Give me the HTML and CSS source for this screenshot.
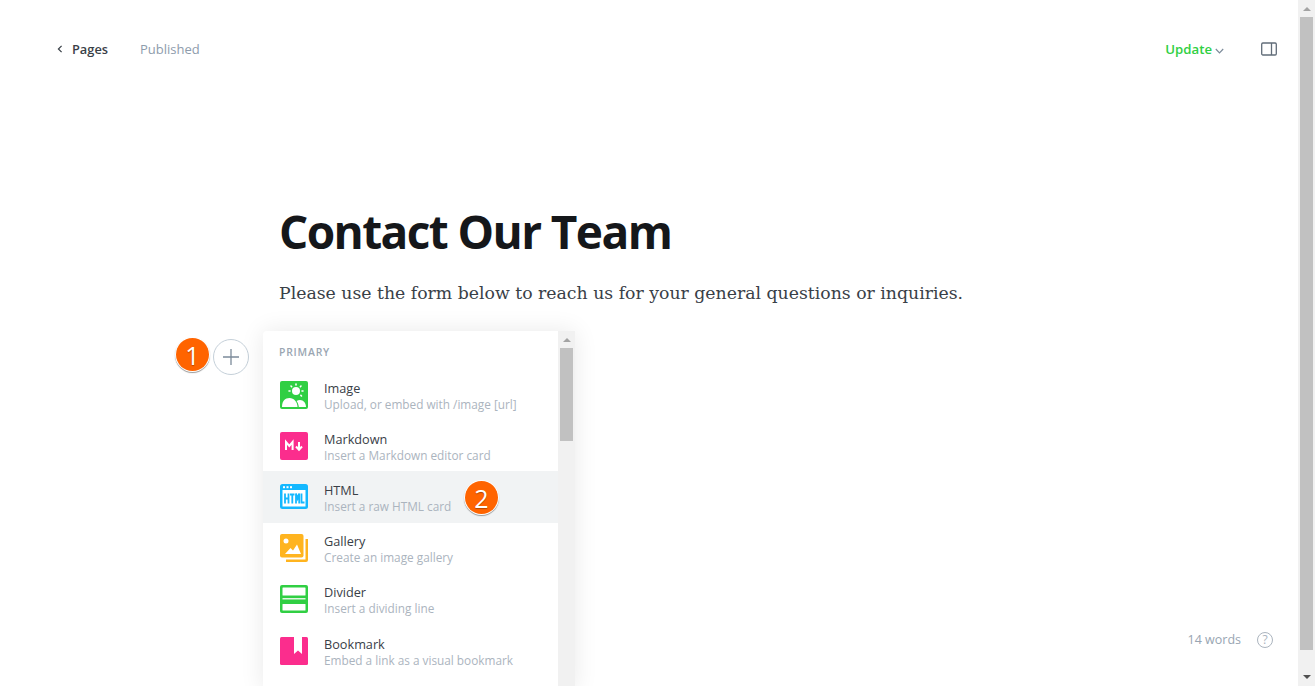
FILE: index.html
```html
<!DOCTYPE html>
<html lang="en">
<head>
<meta charset="utf-8">
<title>Contact Our Team</title>
<link rel="stylesheet" href="styles.css">
</head>
<body>
<div class="app">
  <main class="editor">
    <header class="topbar">
      <div class="crumbs">
        <a class="back">
          <svg class="chev-left" width="6" height="8" viewBox="0 0 6 8"><path d="M4.6 .8 1.400 4l3.200 3.200" fill="none" stroke="#394047" stroke-width="1.200"/></svg>
          Pages
        </a>
        <span class="status">Published</span>
      </div>
      <div class="actions">
        <a class="update">Update
          <svg width="9" height="6" viewBox="0 0 9 6"><path d="M.8 1 4.500 4.800 8.200 1" fill="none" stroke="#7c8b9a" stroke-width="1.200"/></svg>
        </a>
        <svg class="panel-icon" width="16" height="14" viewBox="0 0 16 14"><rect x=".7" y="1" width="14.600" height="12" rx="1.200" fill="none" stroke="#626d79" stroke-width="1.300"/><path d="M10.500 1v12" stroke="#626d79" stroke-width="1.300"/></svg>
      </div>
    </header>

    <section class="content">
      <h1 class="title">Contact Our Team</h1>
      <p class="lead">Please use the form below to reach us for your general questions or inquiries.</p>
    </section>

    <div class="plus">
      <svg width="16" height="16" viewBox="0 0 16 16"><path d="M8 0v16M0 8h16" stroke="#7c8b9a" stroke-width="1.300"/></svg>
    </div>
    <span class="badge badge-one">1</span>

    <div class="menu">
      <div class="menu-list">
        <div class="menu-heading">PRIMARY</div>

        <div class="item">
          <svg class="icon" viewBox="0 0 28 28"><rect width="28" height="28" rx="2" fill="#30cf43"/><circle cx="16" cy="10" r="4" fill="#fff"/><g stroke="#fff" stroke-width="1.600" stroke-linecap="round"><path d="M16 3v1M23 10h-1M10 10H9M21 5l-.6.6M11 5l.6.6M21.500 15l-.6-.6"/></g><path d="M2 26c0-6 3-9 7.500-9s8 4 8 9z" fill="#fff"/><path d="M18.800 26c-.2-2.500-1-4.500-2.200-6 1-.7 2.200-1 3.400-1 3.500 0 6 3 6 7z" fill="#fff"/></svg>
          <div class="item-text"><div class="item-name">Image</div><div class="item-desc">Upload, or embed with /image [url]</div></div>
        </div>

        <div class="item">
          <svg class="icon" viewBox="0 0 28 28"><rect width="28" height="28" rx="2" fill="#fb2d8d"/><path d="M6 18v-8l3.300 4 3.300-4v8" fill="none" stroke="#fff" stroke-width="2"/><path d="M19 10v7.500M16 14.500l3 3.200 3-3.200" fill="none" stroke="#fff" stroke-width="2"/></svg>
          <div class="item-text"><div class="item-name">Markdown</div><div class="item-desc">Insert a Markdown editor card</div></div>
        </div>

        <div class="item is-active">
          <svg class="icon" viewBox="0 0 28 28"><rect y="1" width="28" height="25" rx="2.500" fill="#14b8ff"/><rect x="2.500" y="7" width="23" height="16.500" fill="#fff"/><g fill="#fff"><rect x="3" y="3.200" width="2" height="2"/><rect x="6.500" y="3.200" width="2" height="2"/><rect x="10" y="3.200" width="2" height="2"/></g><path d="M5 10.500v10M8.500 10.500v10M5 15.500h3.500M10 11.500h4.500M12.300 11v9.500M16 20.500v-10l1.600 5 1.600-5v10M21.500 10.500v9h3" fill="none" stroke="#14b8ff" stroke-width="1.800"/></svg>
          <div class="item-text"><div class="item-name">HTML</div><div class="item-desc">Insert a raw HTML card</div></div>
        </div>

        <div class="item">
          <svg class="icon" viewBox="0 0 28 28"><path d="M25.500 5H28v21a2 2 0 0 1-2 2H6v-2.500h19.500z" fill="#ffb41f"/><rect width="23.500" height="23.500" rx="2" fill="#ffb41f"/><circle cx="6" cy="7" r="2.500" fill="#fff"/><path d="M5 20l5.500-6 2.500 2.500 4-6 4 9.500z" fill="#fff"/></svg>
          <div class="item-text"><div class="item-name">Gallery</div><div class="item-desc">Create an image gallery</div></div>
        </div>

        <div class="item">
          <svg class="icon" viewBox="0 0 28 28"><rect width="28" height="28" rx="2" fill="#30cf43"/><rect x="2.500" y="2.500" width="23" height="8" rx=".5" fill="#fff"/><rect x="2.500" y="13" width="23" height="1.500" fill="#dff7e2"/><rect x="2.500" y="19" width="23" height="6.500" rx=".5" fill="#fff"/></svg>
          <div class="item-text"><div class="item-name">Divider</div><div class="item-desc">Insert a dividing line</div></div>
        </div>

        <div class="item">
          <svg class="icon" viewBox="0 0 28 28"><rect width="28" height="28" rx="1.500" fill="#fb2d8d"/><path d="M14 0h8v17l-4-3.500-4 3.500z" fill="#fff"/></svg>
          <div class="item-text"><div class="item-name">Bookmark</div><div class="item-desc">Embed a link as a visual bookmark</div></div>
        </div>
      </div>
      <div class="menu-scroll">
        <span class="arrow-up menu-arrow"></span>
        <div class="menu-thumb"></div>
      </div>
    </div>

    <span class="badge badge-two">2</span>

    <div class="wordcount">
      <span>14 words</span>
      <span class="help">?</span>
    </div>
  </main>

  <aside class="scrollbar">
    <span class="arrow-up"></span>
    <div class="thumb"></div>
    <span class="arrow-down"></span>
  </aside>
</div>
</body>
</html>
```

FILE: styles.css
```css
* { box-sizing: border-box; }

html, body {
  margin: 0;
  height: 100%;
  overflow: hidden;
  background: #fff;
}

body {
  font-family: "Open Sans", "Noto Sans", sans-serif;
  color: #15171a;
}

.app {
  display: flex;
  height: 686px;
}

.editor {
  position: relative;
  flex: 1;
  min-width: 0;
  overflow: hidden;
}

.topbar {
  display: flex;
  justify-content: space-between;
  align-items: center;
  padding: 40px 21px 0 57px;
  height: 58px;
}

.crumbs {
  display: flex;
  align-items: center;
  gap: 32px;
}

.back {
  display: flex;
  align-items: center;
  gap: 9px;
  font-size: 12.800px;
  font-weight: 600;
  color: #394047;
}

.status {
  font-size: 13px;
  color: #8e9cac;
}

.actions {
  display: flex;
  align-items: center;
  gap: 37px;
}

.update {
  display: flex;
  align-items: center;
  gap: 3px;
  font-size: 13.200px;
  font-weight: 600;
  color: #30cf43;
}

.update svg { margin-top: 3px; }

.content {
  padding: 145px 0 0 280px;
}

.title {
  margin: 0 0 0 -1px;
  font-size: 46px;
  line-height: 56px;
  font-weight: 700;
  letter-spacing: -1.600px;
  color: #15171a;
}

.lead {
  margin: 19px 0 0 -1px;
  font-family: "DejaVu Serif", "Liberation Serif", serif;
  font-size: 17.300px;
  line-height: 30px;
  color: #394047;
}

.plus {
  position: absolute;
  left: 213px;
  top: 339px;
  width: 36px;
  height: 36px;
  display: flex;
  align-items: center;
  justify-content: center;
  border: 1px solid #c5d0d9;
  border-radius: 50%;
  background: #fff;
}

.badge {
  position: absolute;
  width: 33px;
  height: 33px;
  display: flex;
  align-items: center;
  justify-content: center;
  border-radius: 50%;
  background: #ff6400;
  color: #fff;
  font-size: 25px;
  font-weight: 500;
  text-shadow: 0 1px 1px rgba(0, 0, 0, .3);
  box-shadow: 0 0 0 1px #fff, 0 1px 1px 1px #9a9a9a;
}

.badge-one { left: 176px; top: 338px; }
.badge-two { left: 465px; top: 481px; }

.menu {
  position: absolute;
  left: 263px;
  top: 331px;
  width: 312px;
  height: 360px;
  display: flex;
  background: #fff;
  border-radius: 4px 0 0 0;
  box-shadow: 0 0 24px rgba(0, 0, 0, .09);
}

.menu-list {
  flex: 1;
  min-width: 0;
}

.menu-heading {
  padding: 14px 16px 0;
  height: 38px;
  font-size: 10.400px;
  line-height: 14px;
  font-weight: 600;
  letter-spacing: .8px;
  color: #9aa6b2;
}

.item {
  display: flex;
  align-items: center;
  gap: 16px;
  height: 51.200px;
  padding: 0 17px;
}

.item.is-active { background: #f1f3f4; }

.icon {
  flex: none;
  width: 28px;
  height: 28px;
}

.item-text { margin-top: 2px; }

.item-name {
  font-size: 12.700px;
  line-height: 16px;
  color: #394047;
}

.item-desc {
  font-size: 11.800px;
  line-height: 16px;
  color: #abb4be;
}

.menu-scroll {
  flex: none;
  width: 17px;
  background: #f1f1f1;
  display: flex;
  flex-direction: column;
  align-items: center;
}

.menu-arrow { margin: 7px 0 6px; }

.menu-thumb {
  width: 13px;
  height: 93px;
  background: #c1c1c1;
}

.arrow-up, .arrow-down {
  display: block;
  width: 0;
  height: 0;
  border-left: 4px solid transparent;
  border-right: 4px solid transparent;
}

.arrow-up { border-bottom: 4px solid #a3a3a3; }
.arrow-down { border-top: 4px solid #505050; }

.wordcount {
  position: absolute;
  right: 25px;
  top: 631px;
  display: flex;
  align-items: center;
  gap: 16px;
  font-size: 12.500px;
  color: #98a5b2;
}

.help {
  width: 16px;
  height: 16px;
  display: flex;
  align-items: center;
  justify-content: center;
  border: 1px solid #abb4be;
  border-radius: 50%;
  font-size: 12px;
  color: #abb4be;
}

.scrollbar {
  flex: none;
  width: 17px;
  background: #f1f1f1;
  display: flex;
  flex-direction: column;
  align-items: center;
}

.scrollbar .arrow-up { margin-top: 7px; }

.thumb {
  width: 13px;
  height: 633px;
  margin-top: 6px;
  background: #c1c1c1;
}

.scrollbar .arrow-down { margin-top: 25px; }
```
